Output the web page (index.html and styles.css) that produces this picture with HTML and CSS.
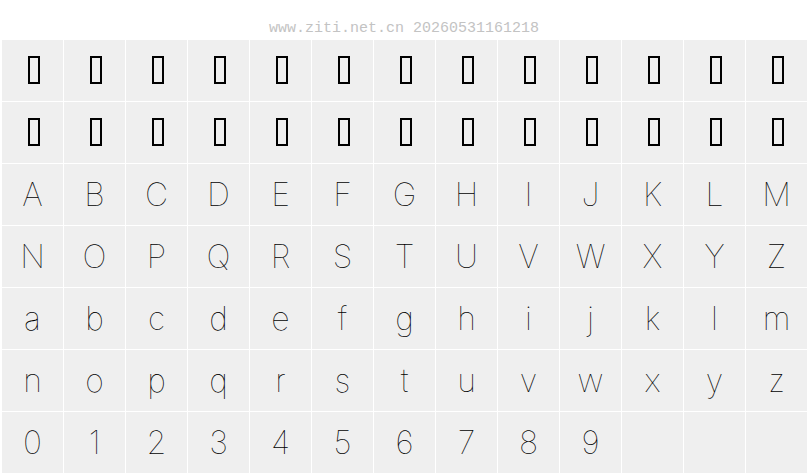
FILE: index.html
```html
<!DOCTYPE html>
<html lang="zh">
<head>
  <meta charset="UTF-8" />
  <title>字体预览</title>
  <link rel="stylesheet" href="styles.css">
</head>
<body>
  <div class="stamp">www.ziti.net.cn 20260531161218</div>
  <div class="chart">
    <div class="cell"><span class="tofu"></span></div>
    <div class="cell"><span class="tofu"></span></div>
    <div class="cell"><span class="tofu"></span></div>
    <div class="cell"><span class="tofu"></span></div>
    <div class="cell"><span class="tofu"></span></div>
    <div class="cell"><span class="tofu"></span></div>
    <div class="cell"><span class="tofu"></span></div>
    <div class="cell"><span class="tofu"></span></div>
    <div class="cell"><span class="tofu"></span></div>
    <div class="cell"><span class="tofu"></span></div>
    <div class="cell"><span class="tofu"></span></div>
    <div class="cell"><span class="tofu"></span></div>
    <div class="cell"><span class="tofu"></span></div>

    <div class="cell"><span class="tofu"></span></div>
    <div class="cell"><span class="tofu"></span></div>
    <div class="cell"><span class="tofu"></span></div>
    <div class="cell"><span class="tofu"></span></div>
    <div class="cell"><span class="tofu"></span></div>
    <div class="cell"><span class="tofu"></span></div>
    <div class="cell"><span class="tofu"></span></div>
    <div class="cell"><span class="tofu"></span></div>
    <div class="cell"><span class="tofu"></span></div>
    <div class="cell"><span class="tofu"></span></div>
    <div class="cell"><span class="tofu"></span></div>
    <div class="cell"><span class="tofu"></span></div>
    <div class="cell"><span class="tofu"></span></div>

    <div class="cell">A</div>
    <div class="cell">B</div>
    <div class="cell">C</div>
    <div class="cell">D</div>
    <div class="cell">E</div>
    <div class="cell">F</div>
    <div class="cell">G</div>
    <div class="cell">H</div>
    <div class="cell">I</div>
    <div class="cell">J</div>
    <div class="cell">K</div>
    <div class="cell">L</div>
    <div class="cell">M</div>

    <div class="cell">N</div>
    <div class="cell">O</div>
    <div class="cell">P</div>
    <div class="cell">Q</div>
    <div class="cell">R</div>
    <div class="cell">S</div>
    <div class="cell">T</div>
    <div class="cell">U</div>
    <div class="cell">V</div>
    <div class="cell">W</div>
    <div class="cell">X</div>
    <div class="cell">Y</div>
    <div class="cell">Z</div>

    <div class="cell">a</div>
    <div class="cell">b</div>
    <div class="cell">c</div>
    <div class="cell">d</div>
    <div class="cell">e</div>
    <div class="cell">f</div>
    <div class="cell">g</div>
    <div class="cell">h</div>
    <div class="cell">i</div>
    <div class="cell">j</div>
    <div class="cell">k</div>
    <div class="cell">l</div>
    <div class="cell">m</div>

    <div class="cell">n</div>
    <div class="cell">o</div>
    <div class="cell">p</div>
    <div class="cell">q</div>
    <div class="cell">r</div>
    <div class="cell">s</div>
    <div class="cell">t</div>
    <div class="cell">u</div>
    <div class="cell">v</div>
    <div class="cell">w</div>
    <div class="cell">x</div>
    <div class="cell">y</div>
    <div class="cell">z</div>

    <div class="cell">0</div>
    <div class="cell">1</div>
    <div class="cell">2</div>
    <div class="cell">3</div>
    <div class="cell">4</div>
    <div class="cell">5</div>
    <div class="cell">6</div>
    <div class="cell">7</div>
    <div class="cell">8</div>
    <div class="cell">9</div>
    <div class="cell"></div>
    <div class="cell"></div>
    <div class="cell"></div>
  </div>
</body>
</html>
```

FILE: styles.css
```css
body {
  margin: 0;
  background: #fff;
}
.stamp {
  height: 40px;
  box-sizing: border-box;
  padding-top: 21px;
  text-align: center;
  font-family: "Liberation Mono", monospace;
  font-size: 15px;
  line-height: 16px;
  color: #c3c3c3;
}
.chart {
  display: grid;
  grid-template-columns: repeat(13, 61px);
  grid-auto-rows: 61px;
  gap: 1px;
  padding-left: 2px;
}
.cell {
  background: #efefef;
  display: flex;
  align-items: center;
  justify-content: center;
  font-family: Inter, "Liberation Sans", sans-serif;
  font-weight: 100;
  font-size: 32px;
  color: #000;
}
.tofu {
  width: 8px;
  height: 24px;
  border: 2px solid #000;
  margin-left: 3px;
  margin-top: -2px;
}
```
